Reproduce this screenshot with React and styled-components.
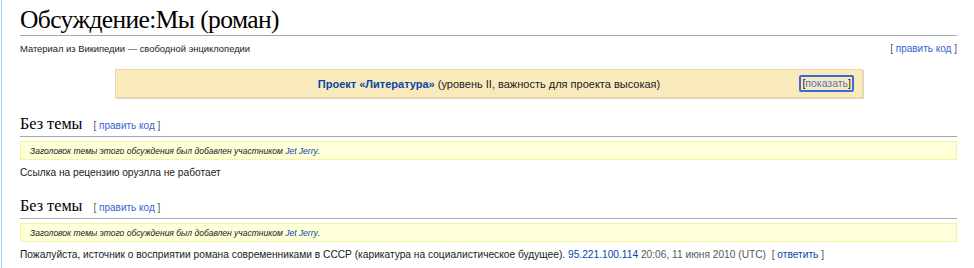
import React from "react";
import styled, { createGlobalStyle } from "styled-components";

const Global = createGlobalStyle`
  html, body { margin: 0; padding: 0; background: #fff; }
  body { font-family: "Liberation Sans", Arial, sans-serif; color: #202122; }
`;

const Page = styled.div`
  margin-left: 1px;
  border-left: 1px solid #a7d7f9;
  padding: 6px 17px 0 18px;
  height: 268px;
  overflow: hidden;
  box-sizing: border-box;
`;

const Title = styled.h1`
  margin: 0;
  font-family: "Liberation Serif", "Times New Roman", serif;
  font-weight: normal;
  font-size: 25.5px;
  letter-spacing: -0.6px;
  line-height: 28px;
  padding-bottom: 1px;
  border-bottom: 1px solid #a2a9b1;
  color: #000;
`;

const SubRow = styled.div`
  display: flex;
  justify-content: space-between;
  align-items: baseline;
  margin-top: 6px;
  font-size: 9.4px;
  line-height: 13px;
`;

const EditLinks = styled.span`
  font-size: 10px;
  color: #54595d;
  margin-left: ${(p) => (p.$inline ? "11px" : "0")};
  font-family: "Liberation Sans", Arial, sans-serif;
  a { color: #3366cc; text-decoration: none; }
`;

const Link = styled.a`
  color: #0645ad;
  text-decoration: none;
  font-weight: ${(p) => (p.$bold ? "bold" : "normal")};
`;

const Banner = styled.div`
  margin: 14px 94px 0 95px;
  background: #f8eabb;
  border: 1px solid #e8dba8;
  box-shadow: 1px 1px 0 #dcd6bb;
  height: 27px;
  display: flex;
  align-items: center;
  position: relative;
  font-size: 11px;
`;

const BannerText = styled.div`
  flex: 1;
  text-align: center;
`;

const ShowButton = styled.span`
  position: absolute;
  right: 8px;
  top: 5px;
  font-size: 10.5px;
  line-height: 13px;
  padding: 0 1px;
  border: 2px solid #3a6ad9;
  border-radius: 2px;
  color: #202122;
  a { color: #5a6ec9; text-decoration: none; }
`;

const SectionHead = styled.h2`
  margin: 17px 0 0;
  font-family: "Liberation Serif", "Times New Roman", serif;
  font-weight: normal;
  font-size: 16.2px;
  line-height: 18px;
  padding-bottom: 1px;
  border-bottom: 1px solid #a2a9b1;
  color: #000;
  display: flex;
  align-items: baseline;
`;

const Notice = styled.div`
  margin-top: 4px;
  background: #ffffd8;
  border: 1px solid #f7f2a0;
  height: 19px;
  box-sizing: border-box;
  display: flex;
  align-items: center;
  padding-left: 9px;
  font-size: 8.5px;
  font-style: italic;
  color: #202122;
`;

const Para = styled.p`
  margin: 6px 0 0;
  font-size: 10.2px;
  line-height: 14px;
`;

const Sig = styled.span`
  color: #54595d;
`;

function Section({ children }) {
  return (
    <>
      <SectionHead>
        Без темы
        <EditLinks $inline>
          [ <a href="#">править код</a> ]
        </EditLinks>
      </SectionHead>
      <Notice>
        Заголовок темы этого обсуждения был добавлен участником&nbsp;<Link href="#">Jet Jerry</Link>.
      </Notice>
      <Para>{children}</Para>
    </>
  );
}

export default function App() {
  return (
    <>
      <Global />
      <Page>
        <Title>Обсуждение:Мы (роман)</Title>
        <SubRow>
          <span>Материал из Википедии — свободной энциклопедии</span>
          <EditLinks>
            [ <a href="#">править код</a> ]
          </EditLinks>
        </SubRow>
        <Banner>
          <BannerText>
            <Link href="#" $bold>Проект «Литература»</Link> (уровень II, важность для проекта высокая)
          </BannerText>
          <ShowButton>
            [<a href="#">показать</a>]
          </ShowButton>
        </Banner>
        <Section>Ссылка на рецензию оруэлла не работает</Section>
        <Section>
          Пожалуйста, источник о восприятии романа современниками в СССР (карикатура на социалистическое будущее).{" "}
          <Link href="#">95.221.100.114</Link> <Sig>20:06, 11 июня 2010 (UTC)</Sig>{" "}
          <Sig>
            &nbsp;[ <Link href="#">ответить</Link> ]
          </Sig>
        </Section>
      </Page>
    </>
  );
}
